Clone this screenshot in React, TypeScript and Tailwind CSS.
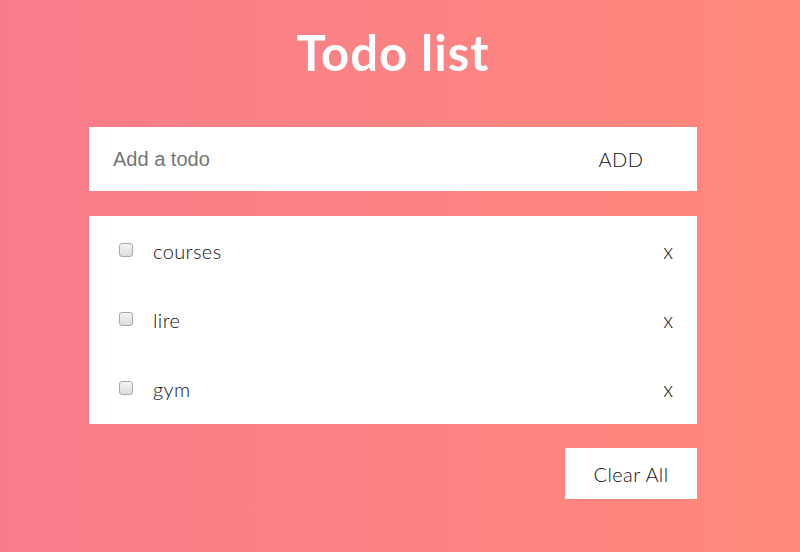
import React, { useState } from 'react';

const gothic = { fontFamily: '"Century Gothic", Lato, "DejaVu Sans", sans-serif' };

export default function App() {
    const [todos, setTodos] = useState([
        { id: 1, text: 'courses', done: false },
        { id: 2, text: 'lire', done: false },
        { id: 3, text: 'gym', done: false },
    ]);
    const [value, setValue] = useState('');

    const addTodo = () => {
        if (!value.trim()) return;
        setTodos([...todos, { id: Date.now(), text: value, done: false }]);
        setValue('');
    };

    return (
        <div
            className="w-[800px] h-[552px] pr-[14px] bg-gradient-to-r from-[#f87c8b] to-[#fe897b] flex flex-col items-center overflow-hidden"
            style={gothic}
        >
            <h1 className="mt-[24px] text-[49px] leading-[56px] font-bold text-white tracking-[1px]">Todo list</h1>

            <div className="mt-[47px] w-[608px] h-[64px] bg-white flex items-center">
                <input
                    value={value}
                    onChange={(e) => setValue(e.target.value)}
                    placeholder="Add a todo"
                    className="flex-1 h-full pl-[24px] text-[20px] outline-none placeholder:text-[#757575]"
                    style={{ fontFamily: '"Liberation Sans", Arial, sans-serif' }}
                />
                <button
                    onClick={addTodo}
                    className="w-[150px] h-full text-[20px] font-light text-[#111] tracking-[0.5px] pr-[2px]"
                >
                    ADD
                </button>
            </div>

            <ul className="mt-[25px] w-[608px] pb-[1px] bg-white flex flex-col">
                {todos.map((t) => (
                    <li key={t.id} className="h-[69px] flex items-center pl-[30px] pr-[24px]">
                        <input
                            type="checkbox"
                            checked={t.done}
                            onChange={() => setTodos(todos.map((x) => (x.id === t.id ? { ...x, done: !x.done } : x)))}
                            className="appearance-none w-[14px] h-[14px] mt-[-2px] rounded-[3px] border border-[#a9a9a9] bg-gradient-to-b from-[#f4f4f4] to-[#dcdcdc] checked:bg-[#3b82f6]"
                        />
                        <span
                            className={`ml-[20px] flex-1 text-[20px] font-light text-[#111] tracking-[0.4px] ${t.done ? 'line-through' : ''}`}
                        >
                            {t.text}
                        </span>
                        <button
                            onClick={() => setTodos(todos.filter((x) => x.id !== t.id))}
                            className="text-[21px] font-light text-[#111]"
                        >
                            x
                        </button>
                    </li>
                ))}
            </ul>

            <div className="mt-[24px] w-[608px] flex justify-end">
                <button
                    onClick={() => setTodos([])}
                    className="w-[132px] h-[51px] bg-white text-[20px] font-light text-[#111] tracking-[0.4px]"
                >
                    Clear All
                </button>
            </div>
        </div>
    );
}
